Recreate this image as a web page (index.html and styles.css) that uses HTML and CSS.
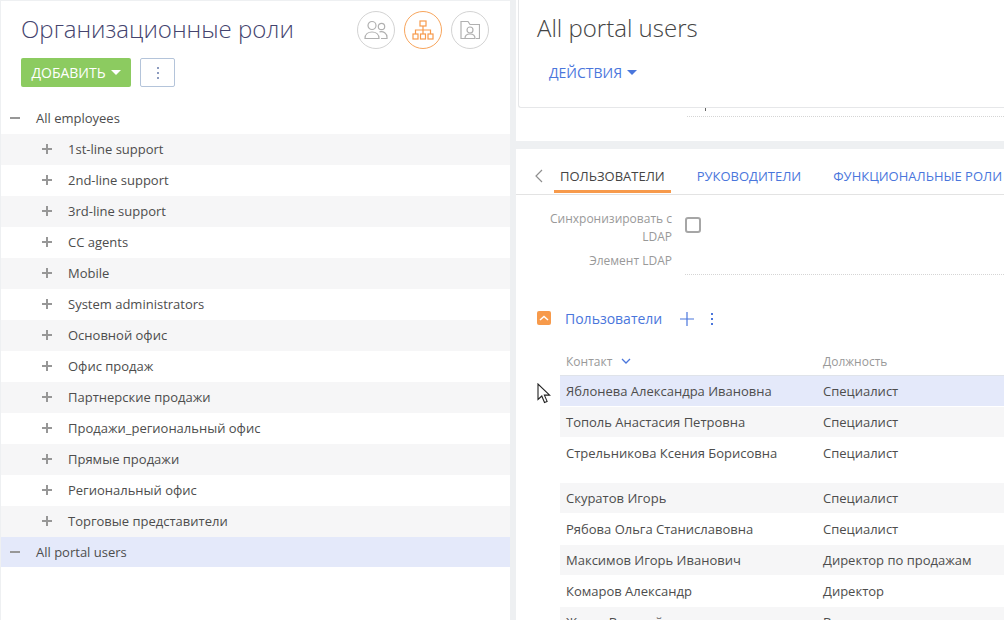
FILE: index.html
```html
<!DOCTYPE html>
<html lang="ru">

<head>
  <meta charset="UTF-8">
  <meta name="viewport" content="width=device-width, initial-scale=1.0">
  <title>Организационные роли</title>
  <link rel="stylesheet" href="styles.css">
</head>

<body>
  <div class="page">
    <!-- Left: role tree -->
    <aside class="roles">
      <div class="roles-head">
        <h1 class="roles-title">Организационные роли</h1>
        <div class="view-switch">
          <button class="view-btn" aria-label="Users">
            <svg width="24" height="20" viewBox="0 0 24 20" fill="none" stroke="currentColor" stroke-width="1.2">
              <circle cx="8" cy="5.5" r="4" />
              <circle cx="17.5" cy="6.5" r="3.2" />
              <path d="M1 18.5c0-4 3-6.5 7-6.5s7 2.5 7 6.5z" />
              <path d="M15.5 11.8c4-1 7.5 1.7 7.5 5.7v1h-6" />
            </svg>
          </button>
          <button class="view-btn active" aria-label="Structure">
            <svg width="22" height="20" viewBox="0 0 22 20" fill="none" stroke="currentColor" stroke-width="1.2">
              <rect x="8" y="1" width="6" height="5" />
              <rect x="1" y="14" width="5" height="5" />
              <rect x="8.5" y="14" width="5" height="5" />
              <rect x="16" y="14" width="5" height="5" />
              <path d="M11 6v8M3.5 14v-4h15v4" />
            </svg>
          </button>
          <button class="view-btn" aria-label="Folder">
            <svg width="20" height="20" viewBox="0 0 20 20" fill="none" stroke="currentColor" stroke-width="1.2">
              <path d="M5 18.5H1V1.5h7l2 3h9.5v14H16" />
              <circle cx="10" cy="10" r="3" />
              <path d="M5 18.5c0-3 2-4.5 5-4.5s5 1.5 5 4.5z" />
            </svg>
          </button>
        </div>
      </div>
      <div class="roles-actions">
        <button class="btn-add">ДОБАВИТЬ<span class="caret"></span></button>
        <button class="btn-more" aria-label="More"><span class="dots"><i></i><i></i><i></i></span></button>
      </div>

      <div class="tree">
        <div class="tree-row"><span class="toggle minus"></span>All employees</div>
        <div class="tree-row sub"><span class="toggle plus"></span>1st-line support</div>
        <div class="tree-row sub"><span class="toggle plus"></span>2nd-line support</div>
        <div class="tree-row sub"><span class="toggle plus"></span>3rd-line support</div>
        <div class="tree-row sub"><span class="toggle plus"></span>CC agents</div>
        <div class="tree-row sub"><span class="toggle plus"></span>Mobile</div>
        <div class="tree-row sub"><span class="toggle plus"></span>System administrators</div>
        <div class="tree-row sub"><span class="toggle plus"></span>Основной офис</div>
        <div class="tree-row sub"><span class="toggle plus"></span>Офис продаж</div>
        <div class="tree-row sub"><span class="toggle plus"></span>Партнерские продажи</div>
        <div class="tree-row sub"><span class="toggle plus"></span>Продажи_региональный офис</div>
        <div class="tree-row sub"><span class="toggle plus"></span>Прямые продажи</div>
        <div class="tree-row sub"><span class="toggle plus"></span>Региональный офис</div>
        <div class="tree-row sub"><span class="toggle plus"></span>Торговые представители</div>
        <div class="tree-row selected"><span class="toggle minus"></span>All portal users</div>
      </div>
    </aside>

    <!-- Right: selected role -->
    <main class="details">
      <section class="top-card">
        <header class="top-head">
          <h2 class="top-title">All portal users</h2>
          <a class="actions-link">ДЕЙСТВИЯ<span class="caret blue"></span></a>
        </header>
        <div class="peek-line"><span class="peek-tick"></span></div>
      </section>

      <section class="tab-card">
        <nav class="tabs">
          <svg class="tab-back" width="10" height="14" viewBox="0 0 10 14" fill="none" stroke="#8f8f8f" stroke-width="1.2">
            <path d="M8 1L2 7l6 6" />
          </svg>
          <a class="tab current">ПОЛЬЗОВАТЕЛИ</a>
          <a class="tab">РУКОВОДИТЕЛИ</a>
          <a class="tab">ФУНКЦИОНАЛЬНЫЕ РОЛИ</a>
        </nav>

        <div class="form">
          <div class="form-row">
            <div class="form-label">Синхронизировать с LDAP</div>
            <span class="checkbox"></span>
          </div>
          <div class="form-row ldap">
            <div class="form-label">Элемент LDAP</div>
            <div class="form-value"></div>
          </div>
        </div>

        <div class="group-head">
          <span class="collapse">
            <svg width="10" height="6" viewBox="0 0 10 6" fill="none" stroke="#fff" stroke-width="1.5">
              <path d="M1 5l4-3.5L9 5" />
            </svg>
          </span>
          <span class="group-title">Пользователи</span>
          <svg class="group-plus" width="14" height="14" viewBox="0 0 14 14" stroke="#4a76dc" stroke-width="1.2">
            <path d="M7 0v14M0 7h14" />
          </svg>
          <span class="dots blue"><i></i><i></i><i></i></span>
        </div>

        <div class="grid">
          <div class="grid-head">
            <div class="col-name">Контакт
              <svg class="sort" width="10" height="6" viewBox="0 0 10 6" fill="none" stroke="#4a76dc" stroke-width="1.3">
                <path d="M1 1l4 4 4-4" />
              </svg>
            </div>
            <div class="col-post">Должность</div>
          </div>
          <div class="grid-row selected">
            <div class="col-name">Яблонева Александра Ивановна</div>
            <div class="col-post">Специалист</div>
          </div>
          <div class="grid-row odd">
            <div class="col-name">Тополь Анастасия Петровна</div>
            <div class="col-post">Специалист</div>
          </div>
          <div class="grid-row tall">
            <div class="col-name">Стрельникова Ксения Борисовна</div>
            <div class="col-post">Специалист</div>
          </div>
          <div class="grid-row odd">
            <div class="col-name">Скуратов Игорь</div>
            <div class="col-post">Специалист</div>
          </div>
          <div class="grid-row">
            <div class="col-name">Рябова Ольга Станиславовна</div>
            <div class="col-post">Специалист</div>
          </div>
          <div class="grid-row odd">
            <div class="col-name">Максимов Игорь Иванович</div>
            <div class="col-post">Директор по продажам</div>
          </div>
          <div class="grid-row">
            <div class="col-name">Комаров Александр</div>
            <div class="col-post">Директор</div>
          </div>
          <div class="grid-row odd">
            <div class="col-name">Жуков Василий</div>
            <div class="col-post">Вице-президент</div>
          </div>
        </div>
      </section>

      <!-- mouse pointer caught in the screenshot -->
      <svg class="cursor" width="14" height="21" viewBox="0 0 14 21">
        <path d="M1 1v15.5l3.8-3.5 2.7 6.5 2.6-1.1-2.7-6.3h5.2z" fill="#fff" stroke="#222" stroke-width="1.1" />
      </svg>
    </main>
  </div>
</body>

</html>
```

FILE: styles.css
```css
* {
  box-sizing: border-box;
}

html,
body {
  margin: 0;
  height: 100%;
  overflow: hidden;
}

body {
  background: #eef0f2;
  font-family: 'Open Sans', 'Liberation Sans', sans-serif;
  font-size: 13px;
  color: #444;
}

h1,
h2 {
  margin: 0;
  font-weight: 300;
}

button {
  font-family: inherit;
  padding: 0;
  cursor: pointer;
}

.page {
  display: flex;
  gap: 6px;
  height: 620px;
  padding-left: 1px;
}

/* left panel */
.roles {
  width: 509px;
  flex: none;
  margin-top: 1px;
  background: #fff;
}

.roles-head {
  display: flex;
  justify-content: space-between;
  align-items: flex-start;
  padding: 10px 20px 0 20px;
}

.roles-title {
  font-size: 24px;
  line-height: 36px;
  color: #44446e;
}

.view-switch {
  display: flex;
  gap: 9px;
  margin-right: 1px;
}

.view-btn {
  width: 38px;
  height: 38px;
  border-radius: 50%;
  border: 1px solid #d3d3d3;
  background: #fff;
  color: #b0b0b0;
  display: flex;
  align-items: center;
  justify-content: center;
}

.view-btn.active {
  border-color: #f8a55c;
  color: #f79a4b;
}

.roles-actions {
  display: flex;
  gap: 9px;
  margin-top: 9px;
  padding-left: 20px;
}

.btn-add {
  width: 110px;
  height: 29px;
  background: #8ccb60;
  border: 0;
  border-radius: 2px;
  color: #fff;
  font-size: 14px;
  display: flex;
  align-items: center;
  justify-content: center;
}

.caret {
  display: inline-block;
  margin-left: 5px;
  border-left: 5px solid transparent;
  border-right: 5px solid transparent;
  border-top: 5px solid #fff;
}

.caret.blue {
  border-top-color: #4a76dc;
}

.btn-more {
  width: 35px;
  height: 29px;
  background: #fff;
  border: 1px solid #b4c4da;
  border-radius: 2px;
  display: flex;
  align-items: center;
  justify-content: center;
}

.dots {
  display: flex;
  flex-direction: column;
  gap: 3px;
}

.dots i {
  display: block;
  width: 2px;
  height: 2px;
  background: #8d9cc0;
}

.dots.blue i {
  background: #4a76dc;
}

.tree {
  margin-top: 16px;
}

.tree-row {
  height: 31px;
  padding-left: 8px;
  padding-bottom: 2px;
  display: flex;
  align-items: center;
  color: #4d4d4d;
}

.tree-row.sub {
  padding-left: 40px;
}

.tree-row.sub:nth-child(even) {
  background: #f6f6f7;
}

.tree-row.selected {
  background: #e4e9fa;
  height: 30px;
  padding-bottom: 0;
}

.toggle {
  position: relative;
  flex: none;
  width: 12px;
  height: 12px;
  margin-right: 15px;
}

.toggle::before,
.toggle.plus::after {
  content: "";
  position: absolute;
  background: #979797;
}

.toggle::before {
  left: 1px;
  right: 1px;
  top: 5px;
  height: 2px;
}

.toggle.plus::after {
  top: 1px;
  bottom: 1px;
  left: 5px;
  width: 2px;
}

/* right panel */
.details {
  position: relative;
  flex: 1;
  min-width: 0;
  display: flex;
  flex-direction: column;
  gap: 8px;
}

.top-card {
  height: 141px;
  flex: none;
  background: #fff;
}

.top-head {
  height: 108px;
  margin-left: 2px;
  padding: 10px 18px 0;
  background: #fff;
  border: 1px solid #e6e7e9;
  border-top: 0;
  border-right: 0;
  border-radius: 0 0 0 3px;
}

.top-title {
  font-size: 24px;
  line-height: 36px;
  color: #444;
}

.actions-link {
  display: inline-flex;
  align-items: center;
  margin: 17px 0 0 12px;
  font-size: 14px;
  color: #4a76dc;
}

.peek-line {
  position: relative;
  height: 9px;
  margin-left: 171px;
  border-bottom: 1px dotted #d5d5d5;
}

.peek-tick {
  position: absolute;
  left: 18px;
  top: 0;
  width: 1px;
  height: 3px;
  background: #666;
}

.tab-card {
  flex: 1;
  background: #fff;
}

.tabs {
  display: flex;
  align-items: center;
  gap: 32px;
  height: 46px;
  padding: 9px 0 0 18px;
  border-bottom: 1px solid #e3e3e3;
  white-space: nowrap;
}

.tab-back {
  margin-right: -16px;
  flex: none;
}

.tab {
  position: relative;
  color: #4a76dc;
}

.tab.current {
  color: #444;
}

.tab.current::after {
  content: "";
  position: absolute;
  left: -6px;
  right: -6px;
  bottom: -8px;
  height: 3px;
  background: #f79a4b;
}

.form {
  padding-top: 15px;
}

.form-row {
  display: flex;
  gap: 13px;
}

.form-label {
  width: 156px;
  flex: none;
  padding-left: 30px;
  text-align: right;
  font-size: 12px;
  line-height: 18px;
  color: #999;
}

.checkbox {
  width: 16px;
  height: 16px;
  margin-top: 7px;
  border: 2px solid #a6a6a6;
  border-radius: 3px;
}

.form-row.ldap {
  margin-top: 6px;
  height: 23px;
}

.form-value {
  flex: 1;
  border-bottom: 1px dotted #d5d5d5;
}

.group-head {
  display: flex;
  align-items: center;
  height: 18px;
  margin-top: 35px;
  padding-left: 21px;
}

.collapse {
  width: 14px;
  height: 14px;
  margin-bottom: 2px;
  border-radius: 2px;
  background: #f79a4b;
  display: flex;
  align-items: center;
  justify-content: center;
}

.group-title {
  margin-left: 14px;
  margin-bottom: 2px;
  font-size: 14px;
  color: #4a76dc;
}

.group-plus {
  margin-left: 18px;
}

.group-head .dots {
  margin-left: 17px;
}

.grid {
  margin: 23px 0 0 44px;
}

.grid-head,
.grid-row {
  display: flex;
  padding-left: 6px;
}

.grid-head {
  height: 25px;
  padding-top: 2px;
  border-bottom: 1px solid #dfe3ea;
  font-size: 12px;
  line-height: 18px;
  color: #999;
}

.sort {
  margin-left: 6px;
  vertical-align: 2px;
}

.col-name {
  width: 257px;
  flex: none;
}

.grid-row {
  height: 30px;
  margin-bottom: 1px;
  align-items: center;
  color: #4d4d4d;
}

.grid-row.selected {
  background: #e4e9fa;
}

.grid-row.odd {
  background: #f6f6f7;
}

.grid-row.tall {
  height: 45px;
  margin-bottom: 0;
  align-items: flex-start;
  padding-top: 6px;
}

.cursor {
  position: absolute;
  left: 21px;
  top: 383px;
}
```
